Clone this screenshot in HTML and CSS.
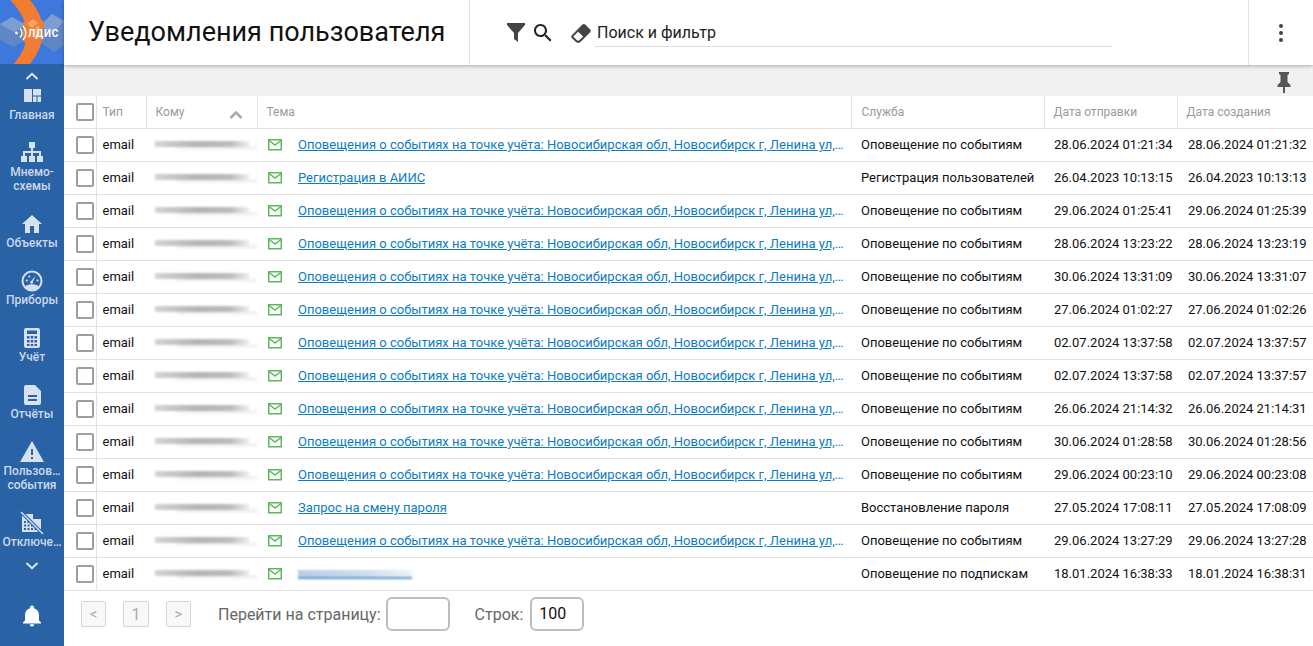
FILE: index.html
```html
<!DOCTYPE html>
<html lang="ru">
<head>
<meta charset="utf-8">
<title>Уведомления пользователя</title>
<link rel="stylesheet" href="styles.css">
</head>
<body>
<svg class="defs" width="0" height="0" aria-hidden="true">
  <symbol id="mail" viewBox="0 0 14 12"><rect x="0.75" y="0.75" width="12.5" height="10" fill="none" stroke="#5cb85c" stroke-width="1.5"/><path d="M1 1.5 7 6l6-4.5" fill="none" stroke="#5cb85c" stroke-width="1.5"/></symbol>
</svg>
<div class="app">
  <aside class="sidebar">
    <div class="logo">
      <svg viewBox="0 0 64 64" width="64" height="64">
        <rect width="64" height="64" fill="#3f78dc"/>
        <path d="M0 24 12 17l14 8v14l-12 8L0 40z" fill="#5f86c6"/>
        <path d="M0 24 12 17l14 8-12 7z" fill="#7f9ed0"/>
        <path d="M40 26 52 14l12 7v24l-10 7-14-10z" fill="#5f86c6"/>
        <path d="M40 26 52 14l12 7-12 13z" fill="#7f9ed0"/>
        <path d="M10 0H30C40 12 44 24 43 34 42 46 36 56 30 64H14C22 54 27 44 27 34 27 22 20 10 10 0z" fill="#f47c30"/>
        <path d="M23 23 34 13 44 22 42 40 33 50 23 41z" fill="#ee7d35"/>
        <path d="M27 24l6-5 5 4-6 5zM34 29l5-4 1 10-5 5z" fill="#f6a368"/>
        <circle cx="16.500" cy="33" r="1.400" fill="#fff"/>
        <path d="M20 28.500a6 6 0 0 1 0 9M23 26a10 10 0 0 1 0 14" fill="none" stroke="#fff" stroke-width="1.400"/>
        <text x="28" y="37" class="logo-text">ЛДИС</text>
      </svg>
    </div>
    <nav class="nav">
      <div class="chev">
        <svg viewBox="0 0 14 8" width="14" height="8"><path d="M1.500 7 7 1.800 12.500 7" fill="none" stroke="#dfe8f4" stroke-width="2"/></svg>
      </div>
      <a class="nav-item">
        <svg class="nav-ico" viewBox="0 0 20 24"><path d="M2 5h8v13H2zM11 5h8v6.500h-8zM11 12.500h3.500V18H11zM15.500 12.500H19V18h-3.500z"/></svg>
        <span>Главная</span>
      </a>
      <a class="nav-item">
        <svg class="nav-ico big" viewBox="0 0 24 24"><path d="M9 1h6v6h-2v3h8v5h2v6h-6v-6h2v-3h-6v3h2v6H9v-6h2v-3H5v3h2v6H1v-6h2v-5h8V7H9z"/></svg>
        <span>Мнемо-<br>схемы</span>
      </a>
      <a class="nav-item">
        <svg class="nav-ico big" viewBox="0 0 24 24"><path d="M10 21v-7h4v7h5v-9h3L12 3 2 12h3v9z"/></svg>
        <span>Объекты</span>
      </a>
      <a class="nav-item">
        <svg class="nav-ico big" viewBox="0 0 24 24"><circle cx="12" cy="12" r="9.500" fill="none" stroke="#d6e2f1" stroke-width="2"/><path d="M5 17.500c1.800-1.400 4.200-2.200 7-2.200s5.200.8 7 2.200a9 9 0 0 1-14 0z"/><path d="M15.800 6.500 12.900 12.400a1.500 1.500 0 1 1-1.500-.6z"/><circle cx="6.800" cy="11.500" r="1.100"/><circle cx="9.300" cy="7.500" r="1.100"/><circle cx="17.500" cy="11.500" r="1.100"/></svg>
        <span>Приборы</span>
      </a>
      <a class="nav-item">
        <svg class="nav-ico big" viewBox="0 0 24 24"><path fill-rule="evenodd" d="M6 2h12a2 2 0 0 1 2 2v16a2 2 0 0 1-2 2H6a2 2 0 0 1-2-2V4a2 2 0 0 1 2-2zm1 2.500V8h10V4.500zM7 10v2.500h2.500V10zm3.750 0v2.500h2.500V10zm3.750 0v2.500H17V10zM7 14v2.500h2.500V14zm3.750 0v2.500h2.500V14zm3.750 0v2.500H17V14zM7 18v2h2.500v-2zm3.750 0v2h2.500v-2zm3.750 0v2H17v-2z"/></svg>
        <span>Учёт</span>
      </a>
      <a class="nav-item">
        <svg class="nav-ico big" viewBox="0 0 24 24"><path fill-rule="evenodd" d="M6 2h9l6 6v12a2 2 0 0 1-2 2H6a2 2 0 0 1-2-2V4a2 2 0 0 1 2-2zm2 10v2h9v-2zm0 4v2h9v-2z"/></svg>
        <span>Отчёты</span>
      </a>
      <a class="nav-item">
        <svg class="nav-ico big" viewBox="0 0 24 24"><path fill-rule="evenodd" d="M12 1 24 22H0zm-1 8v6h2V9zm0 8v2h2v-2z"/></svg>
        <span>Пользов…<br>события</span>
      </a>
      <a class="nav-item">
        <svg class="nav-ico big" viewBox="0 0 24 24"><path fill-rule="evenodd" d="M2 3h11v5h8v13H2zM4 10v2h2v-2zm3.500 0v2h2v-2zM4 13.500v2h2v-2zm3.500 0v2h2v-2zm3.500 0v2h2v-2zM4 17v2h2v-2zm3.500 0v2h2v-2zm3.500 0v2h2v-2zm3.500 0v2h2v-2z"/><path d="M1 1 23 23" stroke="#2a62a6" stroke-width="3.500" fill="none"/><path d="M1 1 23 23" stroke="#d6e2f1" stroke-width="1.500" fill="none"/></svg>
        <span>Отключе…</span>
      </a>
      <div class="chev chev-down">
        <svg viewBox="0 0 14 8" width="14" height="8"><path d="M1.500 1 7 6.200 12.500 1" fill="none" stroke="#dfe8f4" stroke-width="2"/></svg>
      </div>
      <div class="bell">
        <svg viewBox="0 0 24 24" width="24" height="24"><path d="M12 22.500a2.300 2.300 0 0 0 2.300-2.200H9.700A2.300 2.300 0 0 0 12 22.500zM19 16.500v-5.500c0-3.300-1.800-6-5-6.800V3.500a2 2 0 0 0-4 0v.7C6.800 5 5 7.700 5 11v5.500L3 18.500v1h18v-1z" fill="#fff"/></svg>
      </div>
    </nav>
  </aside>
  <main class="main">
    <header class="topbar">
      <h1 class="title">Уведомления пользователя</h1>
      <div class="search">
        <svg class="tool filter" viewBox="0 0 24 24"><path d="M3 3h18v2l-7 8v9l-4-3v-6L3 5z"/></svg>
        <svg class="tool find" viewBox="0 0 24 24"><path d="M15.500 14h-.79l-.28-.27C15.410 12.590 16 11.110 16 9.500 16 5.910 13.090 3 9.500 3S3 5.910 3 9.500 5.910 16 9.500 16c1.610 0 3.090-.59 4.230-1.570l.27.28v.79l5 4.990L20.490 19l-4.990-5zm-6 0C7.010 14 5 11.990 5 9.500S7.010 5 9.500 5 14 7.010 14 9.500 11.990 14 9.500 14z" fill="#222"/></svg>
        <svg class="tool eraser" viewBox="0 0 24 24"><path d="M16.240 3.560 21.190 8.500c.78.790.78 2.050 0 2.840L12 20.530a4.010 4.010 0 0 1-5.660 0L2.810 17c-.78-.79-.78-2.050 0-2.840L13.410 3.560c.79-.78 2.050-.78 2.830 0M4.220 15.580l3.540 3.530c.78.790 2.040.790 2.830 0l3.530-3.530-4.950-4.950-4.950 4.950z"/></svg>
        <div class="search-field">Поиск и фильтр</div>
      </div>
      <div class="menu"><span></span><span></span><span></span></div>
    </header>
    <div class="pinbar">
      <svg viewBox="0 0 24 24" width="24" height="24"><path d="M7 2h10v2l-1.500 1v7l3 3v2H13v6h-2v-6H5.500v-2l3-3V5L7 4z" fill="#555"/></svg>
    </div>
    <div class="table-wrap">
      <table class="grid">
        <colgroup>
          <col class="c-check"><col class="c-type"><col class="c-to"><col class="c-subj"><col class="c-svc"><col class="c-sent"><col class="c-made">
        </colgroup>
        <thead>
          <tr>
            <th class="check"><i class="box"></i></th>
            <th>Тип</th>
            <th><div class="sort">Кому<svg viewBox="0 0 14 9" width="14" height="9"><path d="M1.500 8 7 2.500 12.500 8" fill="none" stroke="#aaa" stroke-width="2.600"/></svg></div></th>
            <th>Тема</th>
            <th>Служба</th>
            <th>Дата отправки</th>
            <th>Дата создания</th>
          </tr>
        </thead>
        <tbody id="rows">
          <tr><td class="check"><i class="box"></i></td><td>email</td><td><div class="blur"></div></td><td><div class="subj"><svg class="mail"><use href="#mail"/></svg><a class="link">Оповещения о событиях на точке учёта: Новосибирская обл, Новосибирск г, Ленина ул, дом 1</a></div></td><td>Оповещение по событиям</td><td>28.06.2024 01:21:34</td><td>28.06.2024 01:21:32</td></tr>
          <tr><td class="check"><i class="box"></i></td><td>email</td><td><div class="blur"></div></td><td><div class="subj"><svg class="mail"><use href="#mail"/></svg><a class="link">Регистрация в АИИС</a></div></td><td>Регистрация пользователей</td><td>26.04.2023 10:13:15</td><td>26.04.2023 10:13:13</td></tr>
          <tr><td class="check"><i class="box"></i></td><td>email</td><td><div class="blur"></div></td><td><div class="subj"><svg class="mail"><use href="#mail"/></svg><a class="link">Оповещения о событиях на точке учёта: Новосибирская обл, Новосибирск г, Ленина ул, дом 1</a></div></td><td>Оповещение по событиям</td><td>29.06.2024 01:25:41</td><td>29.06.2024 01:25:39</td></tr>
          <tr><td class="check"><i class="box"></i></td><td>email</td><td><div class="blur"></div></td><td><div class="subj"><svg class="mail"><use href="#mail"/></svg><a class="link">Оповещения о событиях на точке учёта: Новосибирская обл, Новосибирск г, Ленина ул, дом 1</a></div></td><td>Оповещение по событиям</td><td>28.06.2024 13:23:22</td><td>28.06.2024 13:23:19</td></tr>
          <tr><td class="check"><i class="box"></i></td><td>email</td><td><div class="blur"></div></td><td><div class="subj"><svg class="mail"><use href="#mail"/></svg><a class="link">Оповещения о событиях на точке учёта: Новосибирская обл, Новосибирск г, Ленина ул, дом 1</a></div></td><td>Оповещение по событиям</td><td>30.06.2024 13:31:09</td><td>30.06.2024 13:31:07</td></tr>
          <tr><td class="check"><i class="box"></i></td><td>email</td><td><div class="blur"></div></td><td><div class="subj"><svg class="mail"><use href="#mail"/></svg><a class="link">Оповещения о событиях на точке учёта: Новосибирская обл, Новосибирск г, Ленина ул, дом 1</a></div></td><td>Оповещение по событиям</td><td>27.06.2024 01:02:27</td><td>27.06.2024 01:02:26</td></tr>
          <tr><td class="check"><i class="box"></i></td><td>email</td><td><div class="blur"></div></td><td><div class="subj"><svg class="mail"><use href="#mail"/></svg><a class="link">Оповещения о событиях на точке учёта: Новосибирская обл, Новосибирск г, Ленина ул, дом 1</a></div></td><td>Оповещение по событиям</td><td>02.07.2024 13:37:58</td><td>02.07.2024 13:37:57</td></tr>
          <tr><td class="check"><i class="box"></i></td><td>email</td><td><div class="blur"></div></td><td><div class="subj"><svg class="mail"><use href="#mail"/></svg><a class="link">Оповещения о событиях на точке учёта: Новосибирская обл, Новосибирск г, Ленина ул, дом 1</a></div></td><td>Оповещение по событиям</td><td>02.07.2024 13:37:58</td><td>02.07.2024 13:37:57</td></tr>
          <tr><td class="check"><i class="box"></i></td><td>email</td><td><div class="blur"></div></td><td><div class="subj"><svg class="mail"><use href="#mail"/></svg><a class="link">Оповещения о событиях на точке учёта: Новосибирская обл, Новосибирск г, Ленина ул, дом 1</a></div></td><td>Оповещение по событиям</td><td>26.06.2024 21:14:32</td><td>26.06.2024 21:14:31</td></tr>
          <tr><td class="check"><i class="box"></i></td><td>email</td><td><div class="blur"></div></td><td><div class="subj"><svg class="mail"><use href="#mail"/></svg><a class="link">Оповещения о событиях на точке учёта: Новосибирская обл, Новосибирск г, Ленина ул, дом 1</a></div></td><td>Оповещение по событиям</td><td>30.06.2024 01:28:58</td><td>30.06.2024 01:28:56</td></tr>
          <tr><td class="check"><i class="box"></i></td><td>email</td><td><div class="blur"></div></td><td><div class="subj"><svg class="mail"><use href="#mail"/></svg><a class="link">Оповещения о событиях на точке учёта: Новосибирская обл, Новосибирск г, Ленина ул, дом 1</a></div></td><td>Оповещение по событиям</td><td>29.06.2024 00:23:10</td><td>29.06.2024 00:23:08</td></tr>
          <tr><td class="check"><i class="box"></i></td><td>email</td><td><div class="blur"></div></td><td><div class="subj"><svg class="mail"><use href="#mail"/></svg><a class="link">Запрос на смену пароля</a></div></td><td>Восстановление пароля</td><td>27.05.2024 17:08:11</td><td>27.05.2024 17:08:09</td></tr>
          <tr><td class="check"><i class="box"></i></td><td>email</td><td><div class="blur"></div></td><td><div class="subj"><svg class="mail"><use href="#mail"/></svg><a class="link">Оповещения о событиях на точке учёта: Новосибирская обл, Новосибирск г, Ленина ул, дом 1</a></div></td><td>Оповещение по событиям</td><td>29.06.2024 13:27:29</td><td>29.06.2024 13:27:28</td></tr>
          <tr><td class="check"><i class="box"></i></td><td>email</td><td><div class="blur"></div></td><td><div class="subj"><svg class="mail"><use href="#mail"/></svg><div class="blur blur-link"></div></div></td><td>Оповещение по подпискам</td><td>18.01.2024 16:38:33</td><td>18.01.2024 16:38:31</td></tr>
        </tbody>
      </table>
    </div>
    <footer class="pager">
      <button class="page-btn">&lt;</button>
      <button class="page-btn num">1</button>
      <button class="page-btn">&gt;</button>
      <label class="goto">Перейти на страницу:</label>
      <div class="input goto-input"></div>
      <label class="rows-label">Строк:</label>
      <div class="input rows-input">100</div>
    </footer>
  </main>
</div>
</body>
</html>
```

FILE: styles.css
```css
* { box-sizing: border-box; }
html, body { margin: 0; height: 100%; overflow: hidden; }
body { font-family: Roboto, "Liberation Sans", sans-serif; font-size: 13px; color: #111; background: #fff; }
.defs { position: absolute; }
.app { display: flex; height: 646px; }

.sidebar { width: 64px; flex: none; background: #2a62a6; display: flex; flex-direction: column; }
.logo { height: 64px; flex: none; }
.logo svg { display: block; }
.logo-text { font-family: Roboto, sans-serif; font-size: 10px; font-weight: 700; fill: #fff; letter-spacing: .7px; }
.nav { display: flex; flex-direction: column; flex: 1; }
.chev { height: 20px; display: flex; align-items: center; justify-content: center; padding-top: 4px; flex: none; }
.chev-down { height: 20px; margin-top: 7px; padding-top: 0; }
.nav-item { display: flex; flex-direction: column; align-items: center; padding-bottom: 19px; color: #c9d8ec; font-size: 12px; font-weight: 500; line-height: 14px; text-align: center; white-space: nowrap; }
.nav-item:nth-last-of-type(1) { padding-bottom: 0; }
.nav-ico { width: 20px; height: 24px; fill: #d6e2f1; flex: none; }
.nav-ico.big { width: 24px; }
.bell { margin-top: 28px; display: flex; justify-content: center; }

.main { flex: 1; min-width: 0; display: flex; flex-direction: column; }
.topbar { height: 65px; flex: none; display: flex; align-items: stretch; background: #fff; position: relative; z-index: 2; box-shadow: 0 1px 4px rgba(0,0,0,.3); }
.title { margin: 0; width: 406px; flex: none; padding-left: 24px; font-size: 27px; font-weight: 400; line-height: 64px; color: #111; border-right: 1px solid #e0e0e0; white-space: nowrap; }
.search { flex: 1; display: flex; align-items: center; padding-left: 34px; }
.tool { flex: none; width: 24px; height: 24px; fill: #444; }
.filter { margin-top: -2px; }
.find { margin-left: 3px; }
.eraser { margin-left: 14px; }
.search-field { width: 517px; margin-left: 2px; height: 29px; padding: 1px 0 0 2px; font-size: 16px; line-height: 28px; color: #222; border-bottom: 1px solid #ddd; }
.menu { width: 65px; flex: none; border-left: 1px solid #e0e0e0; display: flex; flex-direction: column; align-items: center; justify-content: center; gap: 3px; }
.menu span { width: 4px; height: 4px; border-radius: 50%; background: #444; }

.pinbar { height: 31px; flex: none; background: #f1f1f1; display: flex; justify-content: flex-end; align-items: center; padding-right: 17px; padding-top: 3px; }

.table-wrap { flex: none; }
.grid { width: 1249px; border-collapse: collapse; table-layout: fixed; }
.c-check { width: 32px; } .c-type { width: 50px; } .c-to { width: 111px; } .c-subj { width: 594px; }
.c-svc { width: 193px; } .c-sent { width: 133px; } .c-made { width: 136px; }
.grid th, .grid td { height: 33px; padding: 0 5px 0 10px; overflow: hidden; white-space: nowrap; border-bottom: 1px solid #e2e2e2; }
.grid th { height: 32px; font-size: 12px; font-weight: 400; color: #9a9a9a; text-align: left; border-right: 1px solid #e2e2e2; }
.grid th:last-child { border-right: 0; padding-left: 9px; }
.grid th:nth-child(2), .grid td:nth-child(2) { padding-left: 6px; }
.grid th:nth-child(3), .grid th:nth-child(4), .grid th:nth-child(6), .grid td:nth-child(3) { padding-left: 9px; }
.grid td { font-size: 13px; color: #111; }
.grid td:nth-child(4) { padding-left: 11px; padding-right: 6px; }
.grid td:nth-child(7) { padding-left: 11px; }
.grid td.check { border-right: 1px solid #e2e2e2; }
.grid .check { padding: 0 0 0 12px; }
.box { display: block; width: 18px; height: 18px; border: 2px solid #9e9e9e; border-radius: 2px; background: #fff; margin-top: 1px; }
.sort { display: flex; justify-content: space-between; align-items: center; padding-right: 9px; }
.sort svg { margin-top: 5px; }
.blur { width: 94px; height: 6px; margin-top: -2px; background: linear-gradient(90deg, #d4d4d4, #b4b4b4 45%, #bcbcbc 80%, #eeeeee); box-shadow: 20px 4px 3px -2px #e4e4e4; filter: blur(1.300px); }
.subj { display: flex; align-items: center; min-width: 0; }
.mail { width: 14px; height: 12px; flex: none; margin: 0 16px 0 0; }
.link { color: #0d7cc1; text-decoration: underline; overflow: hidden; text-overflow: ellipsis; white-space: nowrap; }
.blur-link { width: 114px; height: 9px; margin: 2px 0 0; background: linear-gradient(90deg, #b6cde6, #cfdeee 60%, #eef3f9); box-shadow: none; border-bottom: 2px solid #5c96c8; filter: blur(.8px); }

.pager { display: flex; align-items: center; height: 56px; padding-left: 17px; padding-bottom: 8px; font-size: 16px; color: #666; }
.page-btn { width: 25px; height: 26px; padding: 0; border: 1px solid #d6d6d6; border-radius: 2px; background: #f8f8f8; color: #aaa; font: 400 15px Roboto, sans-serif; margin-right: 17px; }
.page-btn.num { width: 26px; font-size: 16px; }
.page-btn:nth-of-type(3) { margin-right: 0; }
.goto { margin-left: 27px; white-space: nowrap; }
.input { border: 2px solid #bdbdbd; border-radius: 6px; height: 34px; line-height: 30px; background: #fff; }
.goto-input { width: 64px; margin-left: 5px; }
.rows-label { margin-left: 25px; }
.rows-input { width: 54px; margin-left: 7px; padding-left: 7px; color: #111; font-size: 16px; }
```
